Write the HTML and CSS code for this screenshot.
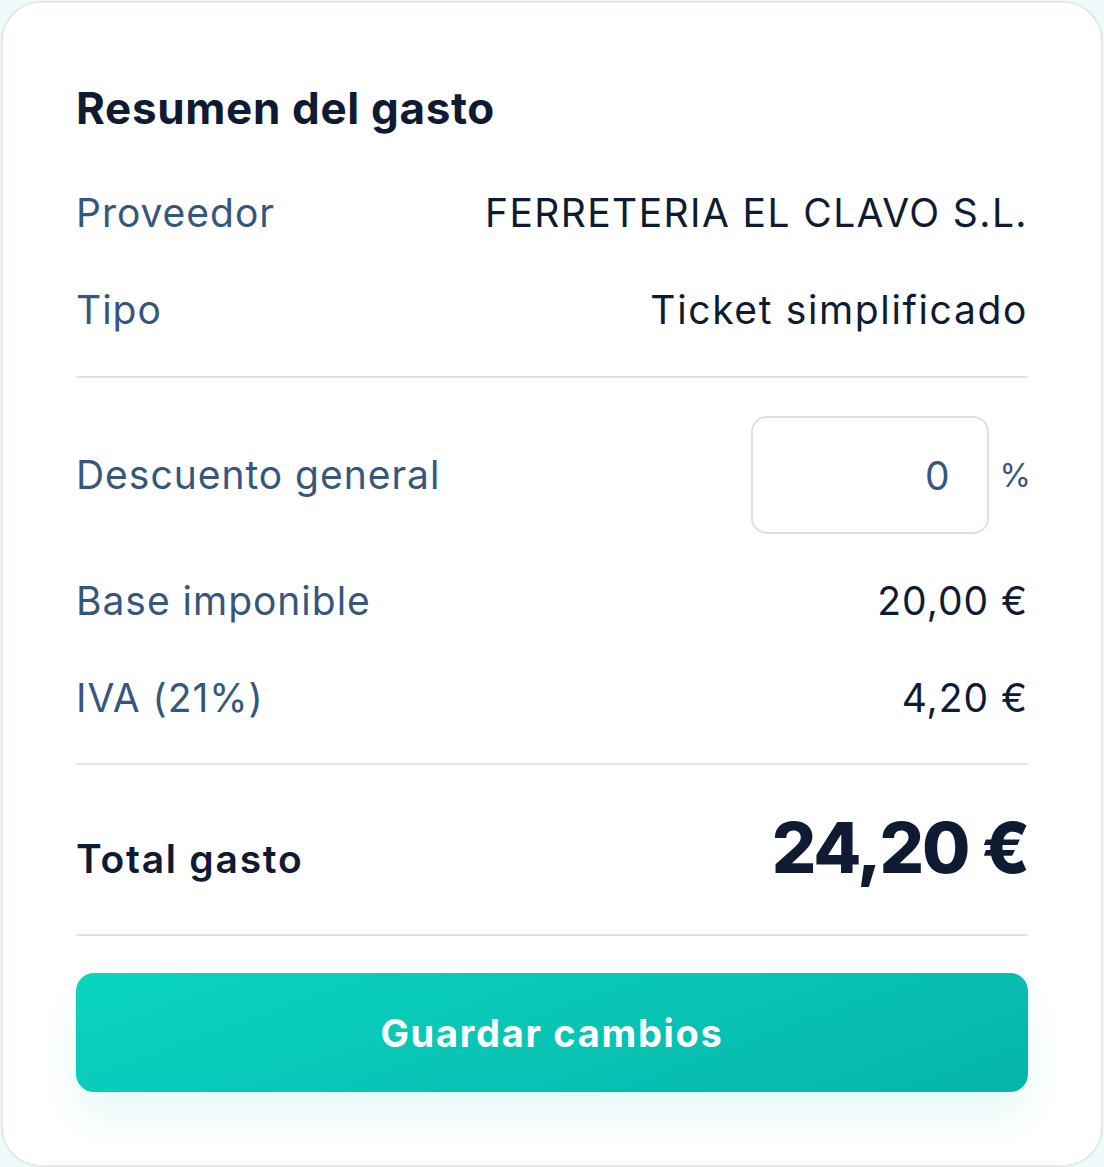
FILE: index.html
```html
<!DOCTYPE html>
<html lang="es">
<head>
    <meta charset="UTF-8">
    <meta name="viewport" content="width=device-width, initial-scale=1.0">
    <title>Resumen del gasto</title>
    <link rel="stylesheet" href="styles.css">
</head>
<body>
    <div class="card">
        <h2 class="title">Resumen del gasto</h2>

        <div class="info">
            <div class="row">
                <span class="label">Proveedor</span>
                <span class="value caps">FERRETERIA EL CLAVO S.L.</span>
            </div>
            <div class="row">
                <span class="label">Tipo</span>
                <span class="value wide">Ticket simplificado</span>
            </div>
        </div>

        <hr class="divider">

        <div class="row discount">
            <span class="label">Descuento general</span>
            <div class="discount-field">
                <input type="text" class="discount-input" value="0">
                <span class="percent">%</span>
            </div>
        </div>

        <div class="amounts">
            <div class="row">
                <span class="label">Base imponible</span>
                <span class="value">20,00 €</span>
            </div>
            <div class="row">
                <span class="label">IVA (21%)</span>
                <span class="value">4,20 €</span>
            </div>
        </div>

        <hr class="divider">

        <div class="row total">
            <span class="total-label">Total gasto</span>
            <span class="total-value">24,20 €</span>
        </div>

        <hr class="divider">

        <button type="button" class="save-btn">Guardar cambios</button>
    </div>
</body>
</html>
```

FILE: styles.css
```css
body {
    font-family: 'Inter', 'Noto Sans', sans-serif;
    margin: 0;
    padding: 1px;
    background: #eef9f9;
    color: #0f1b33;
}
.card {
    background: #ffffff;
    border: 2px solid #e2e8ee;
    border-radius: 40px;
    padding: 79px 73px 73px 73px;
}
.title {
    margin: 0;
    font-size: 44px;
    font-weight: 700;
    line-height: 52px;
    letter-spacing: 0.015em;
    color: #0f1b33;
}
.row {
    display: flex;
    justify-content: space-between;
    align-items: center;
}
.label {
    font-size: 39px;
    line-height: 52px;
    letter-spacing: 0.025em;
    color: #35577d;
}
.value {
    font-size: 39px;
    line-height: 52px;
    letter-spacing: 0.025em;
    color: #0f1b33;
}
.caps {
    letter-spacing: 0.036em;
}
.wide {
    letter-spacing: 0.042em;
}
.info {
    margin-top: 53px;
    display: flex;
    flex-direction: column;
    gap: 45px;
}
.divider {
    border: none;
    height: 2px;
    background: #dde5eb;
    margin: 40px 0 0 0;
}
.discount {
    margin-top: 38px;
}
.discount-field {
    display: flex;
    align-items: center;
    gap: 11px;
}
.discount-input {
    width: 238px;
    height: 118px;
    box-sizing: border-box;
    border: 2px solid #d6e1e9;
    border-radius: 16px;
    padding: 0 37px 0 0;
    text-align: right;
    font-family: inherit;
    font-size: 39px;
    color: #35577d;
    background: #fff;
    outline: none;
}
.percent {
    font-size: 32px;
    color: #35577d;
    margin-right: -3px;
}
.amounts {
    margin-top: 41px;
    display: flex;
    flex-direction: column;
    gap: 45px;
}
.amounts + .divider {
    margin-top: 39px;
}
.total {
    align-items: baseline;
    margin-top: 48px;
}
.total-label {
    font-size: 39px;
    font-weight: 600;
    letter-spacing: 0.045em;
    color: #0f1b33;
}
.total-value {
    font-size: 70px;
    font-weight: 800;
    line-height: 70px;
    letter-spacing: -0.03em;
    color: #0f1b33;
}
.total + .divider {
    margin-top: 51px;
}
.save-btn {
    display: block;
    width: 100%;
    height: 119px;
    margin-top: 37px;
    border: none;
    border-radius: 18px;
    background: linear-gradient(160deg, #0ad5c1, #06b5a8);
    color: #ffffff;
    font-family: inherit;
    font-size: 38px;
    font-weight: 700;
    letter-spacing: 0.045em;
    cursor: pointer;
    box-shadow: 0 24px 40px rgba(10, 200, 185, 0.10);
}
```
